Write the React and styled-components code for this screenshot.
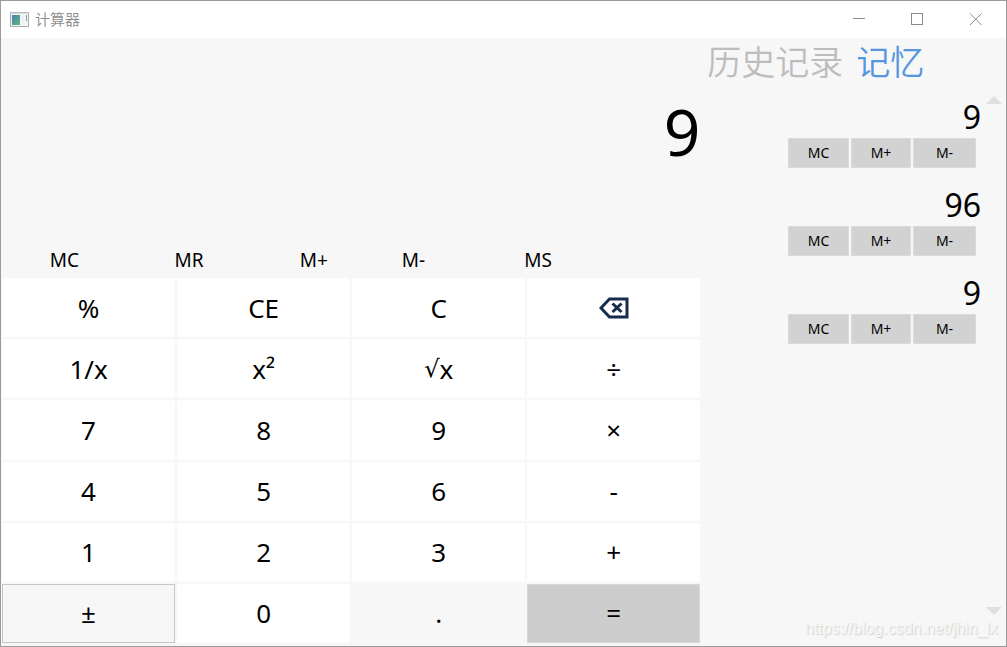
import React from 'react';
import styled, { createGlobalStyle } from 'styled-components';

const GlobalStyle = createGlobalStyle`
  * {
    box-sizing: border-box;
  }

  body {
    margin: 0;
  }

  button {
    padding: 0;
    border: 0;
    font-family: inherit;
    color: inherit;
  }
`;

const Window = styled.div`
  position: relative;
  display: flex;
  flex-direction: column;
  min-height: 100vh;
  border: 1px solid #9c9a9c;
  background: #f7f7f7;
  color: #000;
  font-family: 'Noto Sans', 'Open Sans', 'Noto Sans CJK SC', sans-serif;
`;

// Title bar
const TitleBar = styled.header`
  display: flex;
  align-items: center;
  height: 37px;
  padding: 0 2px 0 9px;
  background: #fff;
  color: #8c8c8c;
`;

const Title = styled.h1`
  flex: 1;
  margin: 0 0 2px 5px;
  font-size: 15px;
  line-height: 20px;
  font-weight: 350;
  font-family: 'Noto Sans CJK SC', sans-serif;
`;

const WindowButton = styled.button`
  display: flex;
  align-items: center;
  justify-content: center;
  width: 58px;
  height: 36px;
  background: transparent;
`;

const Main = styled.main`
  flex: 1;
  display: grid;
  grid-template-columns: 7fr 3fr;
  column-gap: 6px;
`;

// Calculator
const Calculator = styled.section`
  display: flex;
  flex-direction: column;
  padding: 0 0 3px 1px;
`;

const Display = styled.output`
  height: 204px;
  padding-top: 50px;
  text-align: right;
  font-size: 64px;
  line-height: 88px;
`;

const MemoryBar = styled.div`
  display: grid;
  grid-template-columns: 5fr 5fr 5fr 3fr 7fr 3fr;
  height: 36px;
`;

const MemoryKey = styled.button`
  background: transparent;
  font-size: 19px;
  line-height: 36px;
`;

const Keypad = styled.div`
  flex: 1;
  display: grid;
  grid-template-columns: repeat(4, 1fr);
  grid-auto-rows: 1fr;
  gap: 2px;
`;

const keyColors = {
  normal: '#fff',
  focused: '#f7f7f7',
  flat: '#f7f7f7',
  equals: '#cdcdcd',
};

const keyBorders = {
  normal: '#fdfdfd',
  focused: '#c6c6c6',
  flat: '#f7f7f7',
  equals: '#d9d9d9',
};

const Key = styled.button`
  display: flex;
  align-items: center;
  justify-content: center;
  border: 1px solid ${(props) => keyBorders[props.$kind]};
  background: ${(props) => keyColors[props.$kind]};
  font-size: 26px;
  line-height: 36px;
`;

const Radical = styled.span`
  font-family: 'DejaVu Sans', sans-serif;
  font-size: 24px;
`;

// Side panel
const Side = styled.aside`
  display: flex;
  flex-direction: column;
`;

const Tabs = styled.nav`
  display: flex;
  gap: 13px;
  height: 54px;
  padding-left: 1px;
`;

const Tab = styled.button`
  height: 46px;
  background: transparent;
  color: ${(props) => (props.$active ? '#5596de' : '#bdbdbd')};
  font-family: 'Noto Sans CJK SC', sans-serif;
  font-size: 34px;
  font-weight: 350;
  line-height: 46px;
`;

const Scroller = styled.div`
  flex: 1;
  display: flex;
`;

const MemoryList = styled.ul`
  flex: 1;
  margin: 0;
  padding: 0;
  list-style: none;
`;

const MemoryItem = styled.li`
  display: flex;
  flex-direction: column;
  align-items: flex-end;
  height: 88px;
`;

const MemoryValue = styled.span`
  height: 46px;
  padding-right: 4px;
  font-size: 32px;
  line-height: 50px;
`;

const MemoryActions = styled.div`
  display: grid;
  grid-template-columns: 61px 60px 63px;
  gap: 2px;
  padding-right: 9px;
`;

const SmallButton = styled.button`
  height: 30px;
  border: 1px solid #dbdbdb;
  background: #d2d2d2;
  font-size: 14px;
  line-height: 20px;
`;

const ScrollTrack = styled.div`
  display: flex;
  flex-direction: column;
  justify-content: space-between;
  width: 21px;
  padding: 4px 4px 31px 1px;
`;

const ScrollButton = styled.button`
  display: flex;
  height: 8px;
  background: transparent;
`;

const Watermark = styled.a`
  position: absolute;
  right: 8px;
  bottom: 7px;
  color: #f6f6f6;
  font-family: 'Liberation Sans', sans-serif;
  font-size: 16px;
  line-height: 20px;
  text-decoration: none;
  text-shadow: 1px 1px 1px #d0d0d0;
`;

const AppIcon = () => (
  <svg width="20" height="16" viewBox="0 0 20 16" aria-hidden="true">
    <defs>
      <linearGradient id="screen" x1="0" y1="0" x2="1" y2="1">
        <stop offset="0" stopColor="#4a80ad" />
        <stop offset="1" stopColor="#5fb87e" />
      </linearGradient>
    </defs>
    <rect x="0.5" y="0.5" width="18" height="14" fill="#f4f4f4" stroke="#a9adb1" />
    <path d="M0 1h19" stroke="#c3c8cc" />
    <rect x="2" y="3" width="8" height="10" fill="url(#screen)" />
    <rect x="12" y="3" width="2" height="6" fill="#eef0f3" />
    <path d="M16.500 3v6" stroke="#62b08e" />
  </svg>
);

const BackspaceIcon = () => (
  <svg width="30" height="22" viewBox="0 0 30 22" aria-hidden="true" fill="none" stroke="#172b4d">
    <path d="M2 11L10.500 2H28v18H10.500Z" strokeWidth="3" />
    <path d="M13.500 6.500l9 8.500M22.500 6.500l-9 8.500" strokeWidth="3" />
  </svg>
);

const keys = [
  '%', 'CE', 'C', '⌫',
  '1/x', 'x²', '√x', '÷',
  '7', '8', '9', '×',
  '4', '5', '6', '-',
  '1', '2', '3', '+',
  '±', '0', '.', '=',
];

const kinds = { '±': 'focused', '.': 'flat', '=': 'equals' };

const KeyLabel = ({ label }) => {
  if (label === '⌫') return <BackspaceIcon />;
  if (label === '√x') return <><Radical>√</Radical>x</>;
  return label;
};

const App = () => {
  return (
    <>
      <GlobalStyle />
      <Window>
        <TitleBar>
          <AppIcon />
          <Title>计算器</Title>
          <WindowButton aria-label="最小化">
            <svg width="13" height="13" stroke="#8c8c8c"><path d="M0 5.500h12" /></svg>
          </WindowButton>
          <WindowButton aria-label="最大化">
            <svg width="13" height="13" stroke="#8c8c8c" fill="none"><rect x="0.500" y="0.500" width="11" height="11" /></svg>
          </WindowButton>
          <WindowButton aria-label="关闭">
            <svg width="13" height="13" stroke="#8c8c8c"><path d="M1 0.500l11.500 11.500M12.500 0.500l-11.500 11.500" /></svg>
          </WindowButton>
        </TitleBar>
        <Main>
          <Calculator>
            <Display>9</Display>
            <MemoryBar>
              {['MC', 'MR', 'M+', 'M-', 'MS'].map((label) => (
                <MemoryKey key={label}>{label}</MemoryKey>
              ))}
            </MemoryBar>
            <Keypad>
              {keys.map((label) => (
                <Key key={label} $kind={kinds[label] || 'normal'} aria-label={label === '⌫' ? '退格' : undefined}>
                  <KeyLabel label={label} />
                </Key>
              ))}
            </Keypad>
          </Calculator>
          <Side>
            <Tabs>
              <Tab>历史记录</Tab>
              <Tab $active>记忆</Tab>
            </Tabs>
            <Scroller>
              <MemoryList>
                {['9', '96', '9'].map((value, index) => (
                  <MemoryItem key={index}>
                    <MemoryValue>{value}</MemoryValue>
                    <MemoryActions>
                      <SmallButton>MC</SmallButton>
                      <SmallButton>M+</SmallButton>
                      <SmallButton>M-</SmallButton>
                    </MemoryActions>
                  </MemoryItem>
                ))}
              </MemoryList>
              <ScrollTrack>
                <ScrollButton aria-label="向上滚动">
                  <svg width="16" height="8" fill="#e0e0e0"><path d="M0 8L8 0l8 8z" /></svg>
                </ScrollButton>
                <ScrollButton aria-label="向下滚动">
                  <svg width="16" height="8" fill="#e0e0e0"><path d="M0 0h16L8 8z" /></svg>
                </ScrollButton>
              </ScrollTrack>
            </Scroller>
          </Side>
        </Main>
        <Watermark href="https://blog.csdn.net/jhin_lx">https://blog.csdn.net/jhin_lx</Watermark>
      </Window>
    </>
  );
};

export default App;
